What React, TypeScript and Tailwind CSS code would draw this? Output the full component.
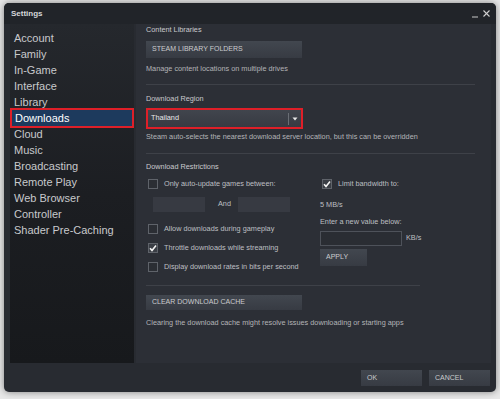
import React from "react";

const font = { fontFamily: '"Liberation Sans", Arial, sans-serif' };

function Check({ checked }: { checked?: boolean }) {
  return (
    <div
      className={`w-[10px] h-[10px] border border-[#5f636a] flex items-center justify-center ${
        checked ? "bg-[#3a3e45]" : "bg-[#2b2e34]"
      }`}
    >
      {checked && (
        <svg width="8" height="8" viewBox="0 0 8 8">
          <polyline points="1,4.2 3,6.4 7,1.4" fill="none" stroke="#f2f2f2" strokeWidth="1.6" />
        </svg>
      )}
    </div>
  );
}

function CheckRow({ label, checked, mt }: { label: string; checked?: boolean; mt: string }) {
  return (
    <div className={`${mt} h-[10px] flex items-center pl-[2px]`}>
      <Check checked={checked} />
      <span className="ml-[6px] text-[7.3px] leading-[10px] text-[#bdbfc2]">{label}</span>
    </div>
  );
}

function Btn({ label, w, h, mt }: { label: string; w: string; h: string; mt?: string }) {
  return (
    <div
      className={`${w} ${h} ${mt ?? ""} bg-gradient-to-b from-[#42474f] to-[#373b43] flex items-center pl-[6px] text-[7px] text-[#cacbce]`}
    >
      {label}
    </div>
  );
}

const Sep = ({ mt, w }: { mt: string; w: string }) => <div className={`${mt} ${w} h-px bg-[#3e4148]`} />;

const items = [
  "Account",
  "Family",
  "In-Game",
  "Interface",
  "Library",
  "Downloads",
  "Cloud",
  "Music",
  "Broadcasting",
  "Remote Play",
  "Web Browser",
  "Controller",
  "Shader Pre-Caching",
];

export default function App() {
  return (
    <div className="w-[500px] h-[399px] bg-[#e8e8e8] pt-[3px] pl-[4px]" style={font}>
      <div className="w-[492px] h-[389px] rounded-[5px] bg-[#282b31] flex flex-col shadow-[0_0_7px_rgba(0,0,0,0.45)] overflow-hidden">
        {/* title bar */}
        <div className="h-[21px] flex items-center justify-between pl-[7px] pr-[6px] bg-[#212429]">
          <span className="text-[8px] font-bold text-[#d6d7d9]">Settings</span>
          <div className="flex items-center gap-[5px]">
            <svg width="6" height="8" viewBox="0 0 6 8">
              <line x1="0" y1="7" x2="6" y2="7" stroke="#c8c8c8" strokeWidth="1" />
            </svg>
            <svg width="7" height="7" viewBox="0 0 7 7">
              <line x1="0.5" y1="0.5" x2="6.5" y2="6.5" stroke="#d0d0d0" strokeWidth="1.1" />
              <line x1="6.5" y1="0.5" x2="0.5" y2="6.5" stroke="#d0d0d0" strokeWidth="1.1" />
            </svg>
          </div>
        </div>

        {/* body */}
        <div className="flex h-[339px] pl-[6px] gap-[2px]">
          {/* sidebar */}
          <div className="w-[124px] h-full bg-gradient-to-b from-[#25282d] via-[#1c1e22] to-[#17191c] pt-[6px] flex flex-col">
            {items.map((it) =>
              it === "Downloads" ? (
                <div
                  key={it}
                  className="h-[20px] -my-[2px] border-2 border-[#de1f28] bg-[#1d3a5d] flex items-center pl-[3px] text-[11px] text-white"
                >
                  {it}
                </div>
              ) : (
                <div key={it} className="h-[16px] flex items-center pl-[4px] text-[11px] text-[#c8c9cc]">
                  {it}
                </div>
              )
            )}
          </div>

          {/* content */}
          <div className="w-[355px] h-full bg-[#2c2f36] pl-[10px] flex flex-col">
            <div className="mt-[1px] h-[10px] leading-[10px] text-[7.3px] text-[#c9cacd]">Content Libraries</div>
            <Btn label="STEAM LIBRARY FOLDERS" w="w-[156px]" h="h-[17px]" mt="mt-[6px]" />
            <div className="mt-[6px] h-[10px] leading-[10px] text-[7.3px] text-[#b3b4b7]">
              Manage content locations on multiple drives
            </div>
            <Sep mt="mt-[10px]" w="w-[329px]" />
            <div className="mt-[9px] h-[10px] leading-[10px] text-[7.3px] text-[#c9cacd]">Download Region</div>
            <div className="mt-[4px] w-[157px] h-[21px] border-2 border-[#de1f28] bg-gradient-to-b from-[#41454d] to-[#373a42] flex items-center">
              <span className="pl-[3px] text-[7.3px] text-[#e8e8e9] flex-1">Thailand</span>
              <div className="w-px h-[12px] bg-[#6a6e75]" />
              <svg width="12" height="6" viewBox="0 0 12 6">
                <polygon points="3.5,1.5 8.5,1.5 6,4.5" fill="#e8e8e8" />
              </svg>
            </div>
            <div className="mt-[3px] h-[10px] leading-[10px] text-[7.3px] text-[#b3b4b7]">
              Steam auto-selects the nearest download server location, but this can be overridden
            </div>
            <Sep mt="mt-[11px]" w="w-[329px]" />
            <div className="mt-[8px] h-[10px] leading-[10px] text-[7.3px] text-[#c9cacd]">Download Restrictions</div>

            <div className="flex">
              <div className="w-[174px] flex flex-col">
                <CheckRow mt="mt-[7px]" label="Only auto-update games between:" />
                <div className="mt-[8px] h-[15px] flex items-center pl-[7px]">
                  <div className="w-[52px] h-[15px] bg-[#373a42]" />
                  <span className="ml-[13px] text-[7.3px] text-[#bdbfc2]">And</span>
                  <div className="ml-[7px] w-[52px] h-[15px] bg-[#373a42]" />
                </div>
                <CheckRow mt="mt-[12px]" label="Allow downloads during gameplay" />
                <CheckRow mt="mt-[9px]" label="Throttle downloads while streaming" checked />
                <CheckRow mt="mt-[9px]" label="Display download rates in bits per second" />
              </div>
              <div className="flex flex-col">
                <CheckRow mt="mt-[7px]" label="Limit bandwidth to:" checked />
                <div className="mt-[11px] h-[10px] leading-[10px] text-[7.3px] text-[#bdbfc2]">5 MB/s</div>
                <div className="mt-[7px] h-[10px] leading-[10px] text-[7.3px] text-[#bdbfc2]">Enter a new value below:</div>
                <div className="mt-[4px] h-[15px] flex items-center">
                  <div className="w-[82px] h-[15px] border border-[#4e525a] bg-[#2a2d33]" />
                  <span className="ml-[4px] text-[7.3px] text-[#bdbfc2]">KB/s</span>
                </div>
                <Btn label="APPLY" w="w-[47px]" h="h-[17px]" mt="mt-[3px]" />
              </div>
            </div>

            <Sep mt="mt-[13px]" w="w-[274px]" />
            <Btn label="CLEAR DOWNLOAD CACHE" w="w-[156px]" h="h-[15px]" mt="mt-[9px]" />
            <div className="mt-[8px] h-[10px] leading-[10px] text-[7.3px] text-[#b3b4b7]">
              Clearing the download cache might resolve issues downloading or starting apps
            </div>
          </div>
        </div>

        {/* footer */}
        <div className="flex justify-end gap-[7px] pr-[6px] pt-[7px]">
          <Btn label="OK" w="w-[61px]" h="h-[16px]" />
          <Btn label="CANCEL" w="w-[61px]" h="h-[16px]" />
        </div>
      </div>
    </div>
  );
}
